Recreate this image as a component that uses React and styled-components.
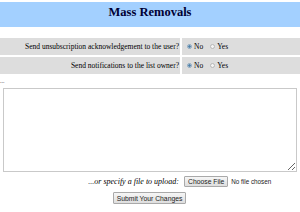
import React from "react";
import styled, { createGlobalStyle } from "styled-components";

const Global = createGlobalStyle`
  html, body { margin: 0; padding: 0; background: #fff; }
  body { font-family: "Liberation Serif", "Times New Roman", serif; color: #000; }
`;

const Page = styled.div`
  width: 300px;
  padding-top: 2px;
`;

const Header = styled.div`
  background: #a3d0ff;
  height: 25px;
  display: flex;
  align-items: flex-start;
  justify-content: center;
`;

const Title = styled.h2`
  margin: 0;
  margin-top: 3px;
  font-size: 12.5px;
  font-weight: bold;
  color: #000033;
`;

const Options = styled.div`
  margin-top: 11px;
  display: grid;
  grid-template-columns: 180px 1fr;
  row-gap: 2px;
  column-gap: 2px;
`;

const Label = styled.div`
  background: #dddddd;
  height: 17px;
  display: flex;
  align-items: center;
  justify-content: flex-end;
  padding-right: 1px;
  font-size: 7.5px;
`;

const Choices = styled.div`
  background: #dddddd;
  height: 17px;
  display: flex;
  align-items: center;
  padding-left: 5px;
  font-size: 7.5px;
`;

const Choice = styled.label`
  display: flex;
  align-items: center;
  margin-right: 7px;
`;

const Radio = styled.input.attrs({ type: "radio" })`
  appearance: none;
  margin: 0 2px 0 0;
  width: 5px;
  height: 5px;
  border-radius: 50%;
  border: 1px solid #b7b7b7;
  background: #f4f4f4;
  &:checked {
    background: radial-gradient(circle, #4b7fa8 0 45%, #9bb8d0 55%, #e8eef3 100%);
    border-color: #8ca6bd;
  }
`;

const Dots = styled.div`
  font-size: 6px;
  color: #555;
  height: 8px;
  line-height: 6px;
  margin-top: 4px;
`;

const TextWrap = styled.div`
  padding: 2px 3px 0 3px;
`;

const Area = styled.textarea`
  display: block;
  width: 294px;
  height: 84px;
  box-sizing: border-box;
  border: 1px solid #c9c9c9;
  margin: 0;
  resize: both;
  font-size: 7px;
`;

const FileRow = styled.div`
  display: flex;
  align-items: center;
  justify-content: flex-end;
  padding-right: 24px;
  margin-top: 3px;
  height: 12px;
  font-size: 7px;
`;

const Hint = styled.span`
  font-style: italic;
  margin-right: 5px;
  font-size: 8px;
  color: #000;
`;

const FileInput = styled.input.attrs({ type: "file" })`
  font-family: "Liberation Sans", Arial, sans-serif;
  font-size: 6.3px;
  width: 92px;
  color: #222;
  &::file-selector-button {
    font-family: "Liberation Sans", Arial, sans-serif;
    font-size: 6.8px;
    padding: 1px 3px;
    margin-right: 3px;
    border: 1px solid #a9a9a9;
    border-radius: 1px;
    background: linear-gradient(#f6f6f6, #dedede);
    color: #222;
  }
`;

const SubmitRow = styled.div`
  display: flex;
  justify-content: center;
  margin-top: 5px;
`;

const Submit = styled.button`
  font-family: "Liberation Sans", Arial, sans-serif;
  font-size: 6.8px;
  padding: 1px 3px;
  height: 12px;
  border: 1px solid #a9a9a9;
  border-radius: 1px;
  background: linear-gradient(#f6f6f6, #dedede);
  color: #222;
  margin-right: 1px;
`;

function YesNo({ name }) {
  return (
    <Choices>
      <Choice>
        <Radio name={name} defaultChecked />
        No
      </Choice>
      <Choice>
        <Radio name={name} />
        Yes
      </Choice>
    </Choices>
  );
}

export default function App() {
  return (
    <>
      <Global />
      <Page>
        <Header>
          <Title>Mass Removals</Title>
        </Header>
        <Options>
          <Label>Send unsubscription acknowledgement to the user?</Label>
          <YesNo name="ack" />
          <Label>Send notifications to the list owner?</Label>
          <YesNo name="notify" />
        </Options>
        <Dots>...</Dots>
        <TextWrap>
          <Area />
        </TextWrap>
        <FileRow>
          <Hint>...or specify a file to upload:</Hint>
          <FileInput />
        </FileRow>
        <SubmitRow>
          <Submit>Submit Your Changes</Submit>
        </SubmitRow>
      </Page>
    </>
  );
}
